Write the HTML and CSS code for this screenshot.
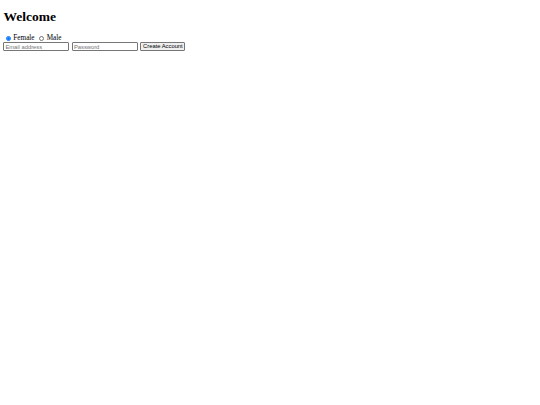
FILE: index.html
```html
<!DOCTYPE html>
<html>
<head>
<meta charset="utf-8">
<title>Welcome</title>
<link rel="stylesheet" href="styles.css">
</head>
<body>
<h1 class="title">Welcome</h1>
<form class="signup">
  <div class="gender">
    <input class="radio" type="radio" id="female" name="gender" value="female" checked>
    <label for="female">Female</label>
    <input class="radio" type="radio" id="male" name="gender" value="male">
    <label for="male">Male</label>
  </div>
  <div class="fields">
    <input class="field" type="email" placeholder="Email address">
    <input class="field" type="password" placeholder="Password">
    <button class="submit" type="button">Create Account</button>
  </div>
</form>
</body>
</html>
```
FILE: styles.css
```css
body {
  margin: 3.4px;
  font-family: "Liberation Serif", "Times New Roman", serif;
  font-size: 7.2px;
  color: #000;
  background: #fff;
}
.title {
  font-size: 13.5px;
  line-height: 15.5px;
  margin: 6px 0 10px;
  font-weight: bold;
}
.signup {
  margin: 0;
}
.gender {
  display: flex;
  align-items: center;
  height: 7.5px;
  line-height: 7.5px;
}
.radio {
  width: 5.2px;
  height: 5.2px;
  margin: 0 2.6px 0 2.2px;
}
.gender label {
  margin-right: 2.2px;
}
.fields {
  display: flex;
  align-items: center;
  gap: 2.5px;
  margin-top: 0;
}
.field,
.submit {
  font-family: "Liberation Sans", Arial, sans-serif;
  font-size: 5.8px;
  box-sizing: border-box;
  height: 9px;
  margin: 0;
}
.field {
  width: 66px;
  padding: 0 1px;
  border: 1px solid #767676;
  border-radius: 1px;
}
.field::placeholder {
  color: #757575;
}
.submit {
  width: 45px;
  padding: 0 1px;
  border: 1px solid #767676;
  border-radius: 1px;
  background: #efefef;
  color: #000;
  line-height: 7px;
}
```
